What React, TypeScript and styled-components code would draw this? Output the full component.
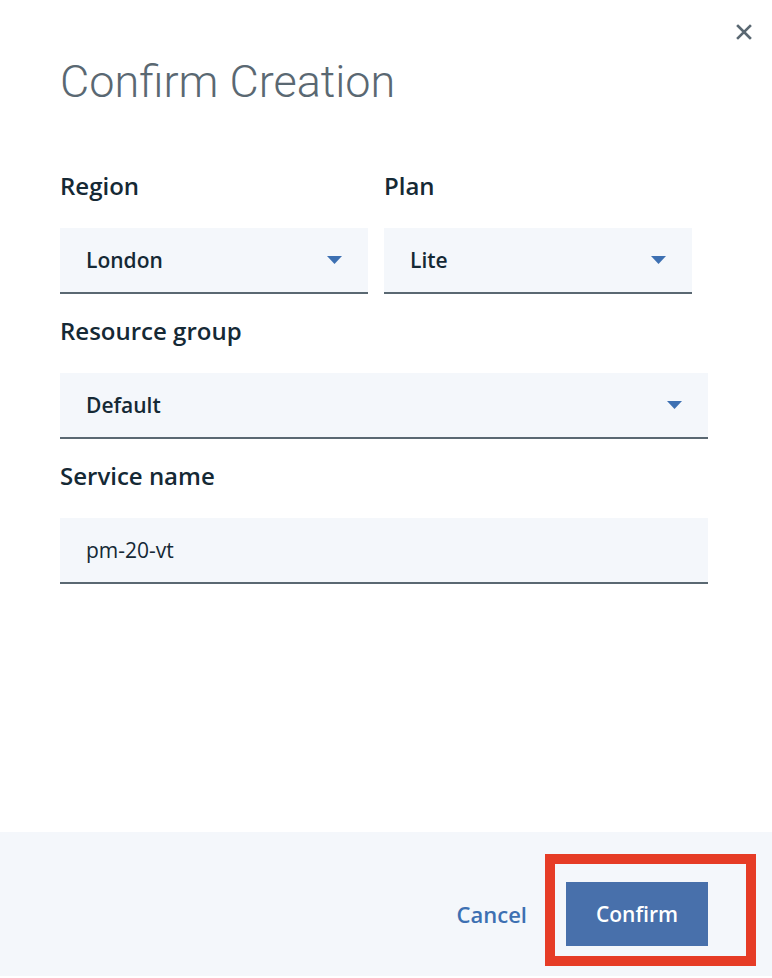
import { FC } from 'react'
import styled, { createGlobalStyle } from 'styled-components'

const GlobalStyle = createGlobalStyle`
  html, body {
    margin: 0;
    padding: 0;
    background: #ffffff;
  }
  body {
    font-family: 'Open Sans', 'Noto Sans', sans-serif;
    color: #152935;
  }
  * {
    box-sizing: border-box;
  }
`

interface ISelectProps {
  value: string
  width?: number
}

const Select: FC<ISelectProps> = ({ value, width }) => (
  <FieldBox $width={width}>
    <FieldValue>{value}</FieldValue>
    <Caret viewBox="0 0 15 8" aria-hidden="true">
      <path d="M0 0h15L7.5 8z" />
    </Caret>
  </FieldBox>
)

const App: FC = () => {
  return (
    <>
      <GlobalStyle />
      <Modal>
        <Header>
          <Title>Confirm Creation</Title>
          <CloseButton aria-label="Close">
            <svg viewBox="0 0 16 16" width="16" height="16">
              <path
                d="M2 2l12 12M14 2L2 14"
                stroke="#5a6872"
                strokeWidth="2.6"
                strokeLinecap="square"
              />
            </svg>
          </CloseButton>
        </Header>

        <Body>
          <Row>
            <Group>
              <Label>Region</Label>
              <Select value="London" width={308} />
            </Group>
            <Group>
              <Label>Plan</Label>
              <Select value="Lite" width={308} />
            </Group>
          </Row>
          <Group>
            <Label>Resource group</Label>
            <Select value="Default" />
          </Group>
          <Group>
            <Label>Service name</Label>
            <FieldBox>
              <InputValue>pm-20-vt</InputValue>
            </FieldBox>
          </Group>
        </Body>

        <Footer>
          <TextButton>Cancel</TextButton>
          <PrimaryButton>
            Confirm
            <Highlight />
          </PrimaryButton>
        </Footer>
      </Modal>
    </>
  )
}

export default App

const Modal = styled.div`
  width: 772px;
  height: 978px;
  display: flex;
  flex-direction: column;
  background: #ffffff;
`
const Header = styled.div`
  display: flex;
  justify-content: space-between;
  align-items: flex-start;
  padding: 24px 20px 0 60px;
  height: 170px;
`
const Title = styled.h1`
  margin: 32px 0 0;
  font-family: Roboto, 'Open Sans', sans-serif;
  font-weight: 300;
  font-size: 45px;
  line-height: 52px;
  color: #5a6872;
`
const CloseButton = styled.button`
  display: flex;
  padding: 0;
  border: 0;
  background: none;
  cursor: pointer;
`
const Body = styled.div`
  flex: 1;
  display: flex;
  flex-direction: column;
  gap: 21px;
  padding: 0 64px 0 60px;
`
const Row = styled.div`
  display: flex;
  gap: 16px;
`
const Group = styled.div`
  display: flex;
  flex-direction: column;
`
const Label = styled.label`
  font-size: 24px;
  font-weight: 600;
  line-height: 32px;
  margin-bottom: 26px;
  color: #152935;
`
const FieldBox = styled.div<{ $width?: number }>`
  display: flex;
  align-items: center;
  justify-content: space-between;
  width: ${({ $width }) => ($width ? `${$width}px` : '100%')};
  height: 66px;
  padding: 0 26px;
  background: #f4f7fb;
  border-bottom: 2px solid #5a6872;
`
const FieldValue = styled.span`
  font-size: 21px;
  font-weight: 600;
  color: #152935;
`
const InputValue = styled.span`
  font-size: 21px;
  font-weight: 400;
  color: #152935;
`
const Caret = styled.svg`
  width: 15px;
  height: 8px;
  fill: #3d70b2;
`
const Footer = styled.div`
  position: relative;
  display: flex;
  justify-content: flex-end;
  align-items: flex-start;
  gap: 26px;
  height: 144px;
  margin-bottom: 2px;
  padding: 50px 64px 0 0;
  background: #f4f7fb;
`
const TextButton = styled.button`
  height: 64px;
  padding: 0 13px;
  border: 0;
  background: none;
  font-family: 'Open Sans', 'Noto Sans', sans-serif;
  font-size: 22px;
  font-weight: 600;
  color: #3d70b2;
  cursor: pointer;
`
const PrimaryButton = styled.button`
  position: relative;
  width: 142px;
  height: 64px;
  border: 0;
  background: #4870ab;
  font-family: 'Open Sans', 'Noto Sans', sans-serif;
  font-size: 21px;
  font-weight: 600;
  color: #ffffff;
  cursor: pointer;
`
const Highlight = styled.span`
  position: absolute;
  left: -21px;
  top: -28px;
  right: -48px;
  bottom: -20px;
  border: 10px solid #e63c26;
  pointer-events: none;
`
